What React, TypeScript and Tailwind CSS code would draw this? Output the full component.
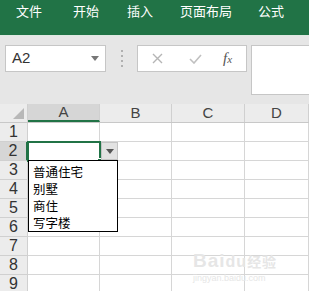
import React from "react";

const cols = [
  { w: 72, label: "A" },
  { w: 72, label: "B" },
  { w: 73, label: "C" },
  { w: 64, label: "D" },
];
const rows = [1, 2, 3, 4, 5, 6, 7, 8, 9];

export default function App() {
  const font = { fontFamily: '"Liberation Sans", Arial, "Noto Sans CJK SC", sans-serif' };
  return (
    <div className="w-[309px] h-[291px] overflow-hidden bg-white relative" style={font}>
      {/* Ribbon tabs */}
      <div className="h-[35px] bg-[#217346] flex items-start pt-[3px] text-white text-[13px] leading-[16px]" style={{ fontFamily: '"Noto Sans CJK SC", "Liberation Sans", sans-serif' }}>
        <span className="ml-[16px]">文件</span>
        <span className="ml-[31px]">开始</span>
        <span className="ml-[28px]">插入</span>
        <span className="ml-[27px]">页面布局</span>
        <span className="ml-[26px]">公式</span>
      </div>
      {/* Formula toolbar */}
      <div className="h-[69px] bg-[#e6e6e6] border-t border-[#dfe9e2] flex items-start pt-[9px] pl-[5px]">
        <div className="w-[101px] h-[27px] bg-white border border-[#c6c6c6] flex items-center pl-[6px] pr-[6px]">
          <span className="text-[15px] text-[#333] flex-1">A2</span>
          <svg width="8" height="5" viewBox="0 0 8 5"><path d="M0 0h8L4 5z" fill="#777" /></svg>
        </div>
        <div className="w-[31px] h-[27px] flex flex-col items-center justify-center gap-[3px]">
          <span className="w-[2px] h-[2px] bg-[#b0b0b0]" />
          <span className="w-[2px] h-[2px] bg-[#b0b0b0]" />
          <span className="w-[2px] h-[2px] bg-[#b0b0b0]" />
          <span className="w-[2px] h-[2px] bg-[#b0b0b0]" />
        </div>
        <div className="w-[110px] h-[27px] bg-white border border-[#c6c6c6] flex items-center">
          <svg className="ml-[14px]" width="11" height="11" viewBox="0 0 11 11">
            <path d="M1 1L10 10M10 1L1 10" stroke="#b5b5b5" strokeWidth="1.4" />
          </svg>
          <svg className="ml-[26px]" width="13" height="10" viewBox="0 0 13 10">
            <path d="M1 5L5 9L12 1" stroke="#c0c0c0" strokeWidth="1.6" fill="none" />
          </svg>
          <span className="ml-[21px] text-[15px] italic text-[#555]" style={{ fontFamily: '"Liberation Serif", serif' }}>
            f<span className="text-[11px]">x</span>
          </span>
        </div>
        <div className="ml-[4px] flex-1 h-[50px] bg-white border border-r-0 border-[#c6c6c6]" />
      </div>
      {/* Sheet */}
      <div className="relative">
        <div className="flex h-[19px] bg-[#ececec] border-b border-[#c8c8c8]">
          <div className="w-[28px] h-full border-r border-[#d0d0d0] relative">
            <svg className="absolute right-[3px] bottom-[3px]" width="11" height="11" viewBox="0 0 11 11">
              <path d="M11 0V11H0z" fill="#b8b8b8" />
            </svg>
          </div>
          {cols.map((c, i) => (
            <div
              key={c.label}
              className={
                "h-full border-r border-[#d0d0d0] flex items-center justify-center text-[15px] text-[#444] " +
                (i === 0 ? "bg-[#d6d6d6] border-b-2 border-b-[#217346]" : "")
              }
              style={{ width: c.w }}
            >
              {c.label}
            </div>
          ))}
        </div>
        {rows.map((r) => (
          <div key={r} className="flex h-[19px]">
            <div
              className={
                "w-[28px] h-full border-r border-b border-[#d0d0d0] flex items-center justify-center text-[16px] text-[#333] " +
                (r === 2 ? "bg-[#d6d6d6] border-r-2 border-r-[#217346]" : "bg-[#ececec]")
              }
            >
              {r}
            </div>
            {cols.map((c) => (
              <div key={c.label} className="h-full border-r border-b border-[#d6d6d6]" style={{ width: c.w }} />
            ))}
          </div>
        ))}

        {/* Selection A2 */}
        <div className="absolute left-[27px] top-[37px] w-[74px] h-[21px] border-2 border-[#217346]" />
        <div className="absolute left-[97px] top-[54px] w-[5px] h-[5px] bg-[#217346] border border-white" />
        {/* Dropdown button */}
        <div className="absolute left-[101px] top-[38px] w-[17px] h-[18px] bg-[#e2e2e2] border border-[#c4c4c4] flex items-center justify-center">
          <svg width="8" height="5" viewBox="0 0 8 5"><path d="M0 0h8L4 5z" fill="#555" /></svg>
        </div>
        {/* Dropdown list */}
        <div
          className="absolute left-[28px] top-[56px] w-[90px] h-[72px] bg-white border border-black pl-[4px] pt-[2px] text-[12.5px] leading-[17px] text-black"
          style={{ fontFamily: '"Noto Sans CJK SC", "Liberation Sans", sans-serif' }}
        >
          <div>普通住宅</div>
          <div>别墅</div>
          <div>商住</div>
          <div>写字楼</div>
        </div>
        {/* Watermark */}
        <div className="absolute left-[193px] top-[147px] text-[#e6e6e6] leading-none select-none">
          <div className="text-[19px] font-bold tracking-[1px]">Bai<span className="text-[16px]">du</span><span className="text-[14px]" style={{ fontFamily: '"Noto Sans CJK SC", sans-serif' }}>经验</span></div>
          <div className="text-[9px] mt-[4px]">jingyan.baidu.com</div>
        </div>
      </div>
    </div>
  );
}
